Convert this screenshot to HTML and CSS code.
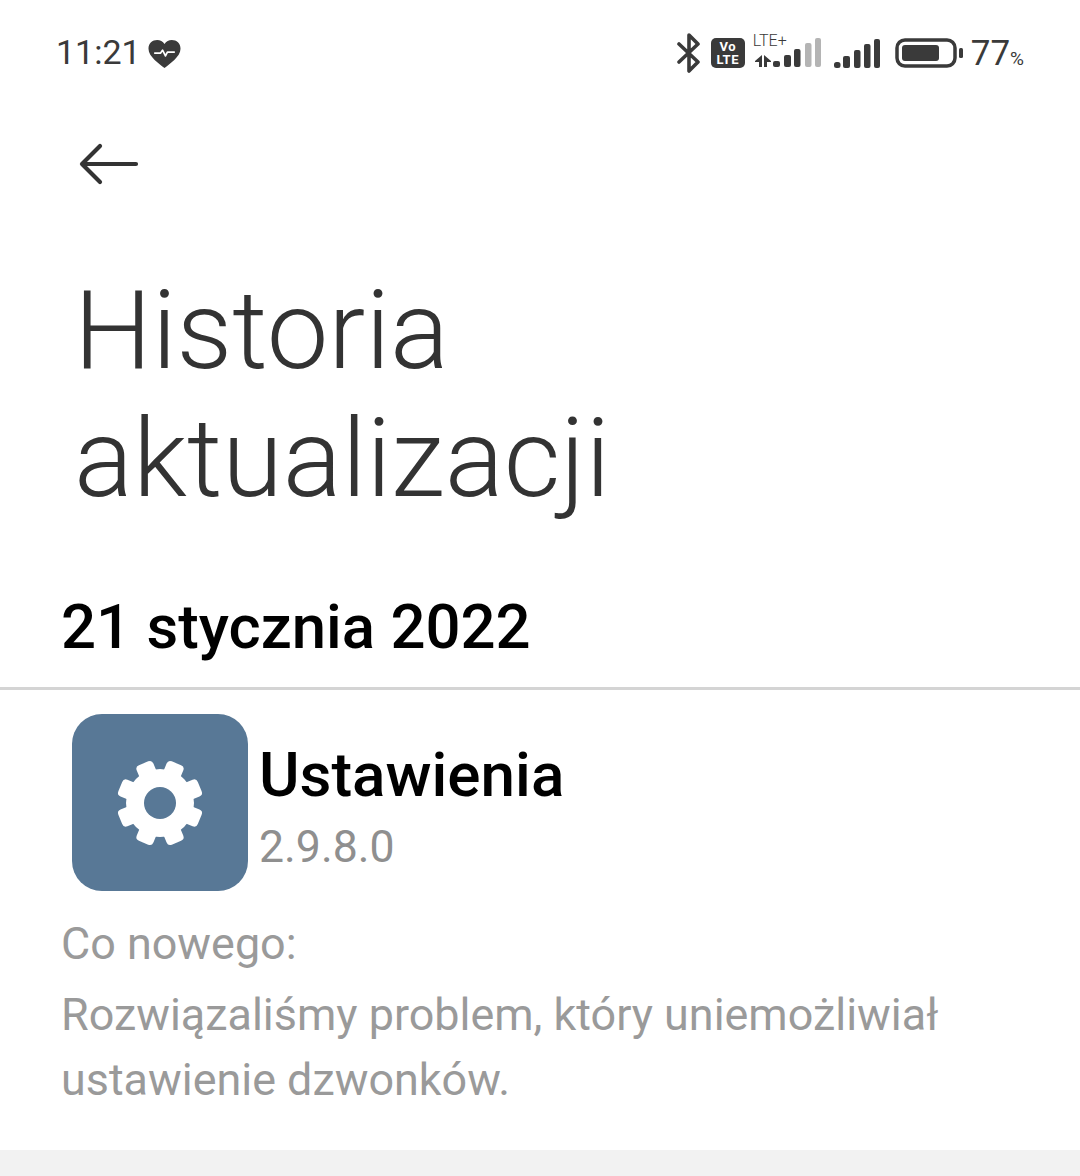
FILE: index.html
```html
<!DOCTYPE html>
<html>
<head>
  <meta charset="UTF-8">
  <title>Historia aktualizacji</title>
  <link rel="stylesheet" href="styles.css">
</head>
<body>
  <div class="status-bar">
    <div class="status-left">
      <span class="clock">11:21</span>
      <svg class="heart" width="33" height="30" viewBox="0 0 34 30">
        <path d="M17 29.500C12 25 .5 18 .5 9.500 .5 4 4.500 .5 9.500 .5c3 0 5.800 1.500 7.500 4.200C18.700 2 21.500 .5 24.500 .5 29.500 .5 33.500 4 33.500 9.500 33.500 18 22 25 17 29.500z" fill="#3a3a3a"/>
        <path d="M7 14h6l2-3 3 6 2-4h7" fill="none" stroke="#fff" stroke-width="1.800" stroke-linejoin="round" stroke-linecap="round"/>
      </svg>
    </div>
    <div class="status-right">
      <svg class="bluetooth" width="26" height="40" viewBox="0 0 26 40">
        <path d="M3 11l19 18-9 9V2l9 9L3 29" fill="none" stroke="#3a3a3a" stroke-width="3.600" stroke-linejoin="round" stroke-linecap="round"/>
      </svg>
      <div class="volte"><span>Vo</span><span>LTE</span></div>
      <div class="lte">
        <span class="lte-label">LTE+</span>
        <svg class="lte-bars" width="66" height="30" viewBox="0 0 66 30">
          <path d="M0 23L7 17V29H4V24H0ZM9 17L16 23V24H12V29H9Z" fill="#3a3a3a"/>
          <rect x="18" y="23" width="7" height="6" rx="2" fill="#3a3a3a"/>
          <rect x="29" y="17" width="7" height="12" rx="2" fill="#3a3a3a"/>
          <rect x="39" y="11" width="6.500" height="18" rx="2" fill="#3a3a3a"/>
          <rect x="50" y="5" width="6.500" height="24" rx="2" fill="#b4b4b4"/>
          <rect x="60" y="0" width="6" height="29" rx="2" fill="#b4b4b4"/>
        </svg>
      </div>
      <svg class="signal" width="46" height="30" viewBox="0 0 46 30">
        <rect x="0" y="23" width="6.500" height="6" rx="2.500" fill="#3a3a3a"/>
        <rect x="9" y="17" width="7" height="12" rx="2" fill="#3a3a3a"/>
        <rect x="20" y="11" width="6.500" height="18" rx="2" fill="#3a3a3a"/>
        <rect x="30" y="5" width="6.500" height="24" rx="2" fill="#3a3a3a"/>
        <rect x="40" y="0" width="6" height="29" rx="2" fill="#3a3a3a"/>
      </svg>
      <svg class="battery" width="68" height="30" viewBox="0 0 68 30">
        <rect x="2" y="2" width="58" height="26" rx="8" fill="none" stroke="#3a3a3a" stroke-width="3.500"/>
        <rect x="7" y="7" width="37" height="16" rx="3" fill="#3a3a3a"/>
        <rect x="64" y="10" width="4" height="10" rx="1.500" fill="#3a3a3a"/>
      </svg>
      <span class="battery-text">77<small>%</small></span>
    </div>
  </div>

  <div class="toolbar">
    <svg width="60" height="44" viewBox="0 0 60 44">
      <path d="M3 22h54M21 4L3 22l18 18" fill="none" stroke="#333" stroke-width="4.200" stroke-linecap="round" stroke-linejoin="round"/>
    </svg>
  </div>

  <h1 class="page-title">Historia<br>aktualizacji</h1>

  <div class="date-header">21 stycznia 2022</div>

  <div class="update-item">
    <div class="app-row">
      <div class="app-icon">
        <svg width="90" height="90" viewBox="-45 -45 90 90">
          <g fill="#fff">
            <circle r="34"/>
            <rect x="-9" y="-43" width="18" height="20" rx="4" transform="rotate(22.500)"/>
            <rect x="-9" y="-43" width="18" height="20" rx="4" transform="rotate(67.500)"/>
            <rect x="-9" y="-43" width="18" height="20" rx="4" transform="rotate(112.500)"/>
            <rect x="-9" y="-43" width="18" height="20" rx="4" transform="rotate(157.500)"/>
            <rect x="-9" y="-43" width="18" height="20" rx="4" transform="rotate(202.500)"/>
            <rect x="-9" y="-43" width="18" height="20" rx="4" transform="rotate(247.500)"/>
            <rect x="-9" y="-43" width="18" height="20" rx="4" transform="rotate(292.500)"/>
            <rect x="-9" y="-43" width="18" height="20" rx="4" transform="rotate(337.500)"/>
          </g>
          <circle r="16" fill="#587896"/>
        </svg>
      </div>
      <div class="app-info">
        <div class="app-name">Ustawienia</div>
        <div class="app-version">2.9.8.0</div>
      </div>
    </div>
    <div class="whats-new">
      <div class="whats-new-title">Co nowego:</div>
      <div>Rozwiązaliśmy problem, który uniemożliwiał ustawienie dzwonków.</div>
    </div>
  </div>

  <div class="footer-strip"></div>
</body>
</html>
```
FILE: styles.css
```css
* {
  box-sizing: border-box;
}
body {
  margin: 0;
  height: 1176px;
  overflow: hidden;
  background: #fff;
  font-family: Roboto, "Noto Sans", sans-serif;
  display: flex;
  flex-direction: column;
}
.status-bar {
  height: 104px;
  padding: 30px 56px 0 56px;
  display: flex;
  justify-content: space-between;
  align-items: flex-start;
  color: #3a3a3a;
}
.status-left {
  display: flex;
  align-items: center;
  gap: 7px;
  height: 44px;
}
.clock {
  font-size: 34px;
}
.heart {
  margin-top: 3px;
}
.status-right {
  display: flex;
  align-items: center;
  height: 44px;
}
.bluetooth {
  margin-right: 9px;
  margin-top: 2px;
}
.volte {
  width: 34px;
  height: 30px;
  margin-top: 2px;
  background: #3a3a3a;
  border-radius: 5px;
  color: #fff;
  font-size: 13px;
  font-weight: 700;
  line-height: 13px;
  letter-spacing: 0.5px;
  display: flex;
  flex-direction: column;
  align-items: center;
  justify-content: center;
}
.lte {
  width: 66px;
  height: 44px;
  margin-left: 10px;
  position: relative;
}
.lte-label {
  position: absolute;
  top: 3px;
  left: -2px;
  font-size: 16px;
  line-height: 16px;
  font-weight: 300;
}
.lte-bars {
  position: absolute;
  left: 0;
  top: 8px;
}
.signal {
  margin-left: 13px;
  margin-top: 3px;
}
.battery {
  margin-left: 15px;
  margin-top: 2px;
}
.battery-text {
  margin-left: 8px;
  font-size: 35px;
  font-weight: 400;
  margin-top: 2px;
}
.battery-text small {
  font-size: 19px;
}
.toolbar {
  height: 100px;
  padding: 38px 0 0 79px;
}
.toolbar svg {
  display: block;
}
.page-title {
  margin: 0;
  padding: 63px 0 0 74px;
  font-size: 110px;
  font-weight: 300;
  line-height: 128px;
  color: #333;
  height: 388px;
}
.date-header {
  padding-left: 61px;
  font-size: 61.700px;
  font-weight: 500;
  line-height: 70px;
  height: 98px;
  color: #000;
  border-bottom: 3px solid #d4d4d4;
}
.update-item {
  padding: 24px 62px 0 61px;
  flex: 1;
}
.app-row {
  display: flex;
  align-items: flex-start;
  padding-left: 11px;
}
.app-icon {
  width: 176px;
  height: 177px;
  background: #587896;
  border-radius: 30px;
  display: flex;
  align-items: center;
  justify-content: center;
  flex-shrink: 0;
}
.app-info {
  margin-left: 11px;
}
.app-name {
  font-size: 62px;
  font-weight: 500;
  line-height: 70px;
  margin-top: 26px;
  color: #000;
}
.app-version {
  font-size: 44.600px;
  line-height: 56px;
  margin-top: 9px;
  color: #8f8f8f;
}
.whats-new {
  margin-top: 20px;
  font-size: 44.900px;
  line-height: 65px;
  color: #9a9a9a;
}
.whats-new-title {
  margin-bottom: 6px;
}
.footer-strip {
  height: 26px;
  background: #f2f2f2;
}
```
